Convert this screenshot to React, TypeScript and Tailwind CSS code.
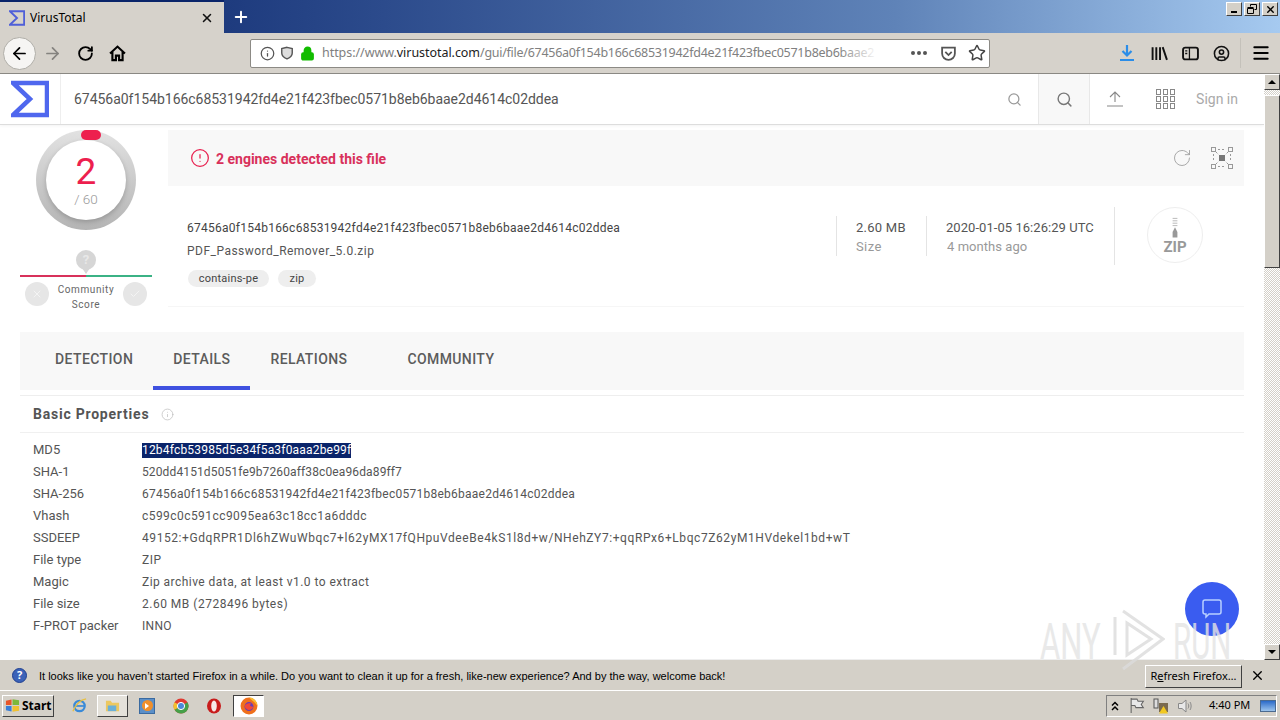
import { ArrowLeft, ArrowRight, RotateCw, Info, Lock, Star, Search, Check, X, Plus, Menu, CircleUser, AlertCircle } from "lucide-react";

const hash = "67456a0f154b166c68531942fd4e21f423fbec0571b8eb6baae2d4614c02ddea";

const props = [
  { label: "MD5", value: "12b4fcb53985d5e34f5a3f0aaa2be99f", track: "tracking-[0.19px]" },
  { label: "SHA-1", value: "520dd4151d5051fe9b7260aff38c0ea96da89ff7", track: "tracking-[0.125px]" },
  { label: "SHA-256", value: hash, track: "tracking-[0.25px]" },
  { label: "Vhash", value: "c599c0c591cc9095ea63c18cc1a6dddc", track: "tracking-[0.44px]" },
  { label: "SSDEEP", value: "49152:+GdqRPR1Dl6hZWuWbqc7+l62yMX17fQHpuVdeeBe4kS1l8d+w/NHehZY7:+qqRPx6+Lbqc7Z62yM1HVdekel1bd+wT", track: "tracking-[0.58px]" },
  { label: "File type", value: "ZIP", track: "tracking-[0.5px]" },
  { label: "Magic", value: "Zip archive data, at least v1.0 to extract", track: "tracking-[0.45px]" },
  { label: "File size", value: "2.60 MB (2728496 bytes)", track: "tracking-[0.5px]" },
  { label: "F-PROT packer", value: "INNO", track: "tracking-[0.3px]" },
];

const Sigma = ({ className }: { className: string }) => (
  <svg viewBox="0 0 38 38" className={className} fill="none" stroke="currentColor">
    <path d="M2 3H36V35H2L19 19Z" strokeWidth="4.5" />
  </svg>
);

const WinBtn = ({ children }: { children: React.ReactNode }) => (
  <div className="w-[16px] h-[14px] bg-[#d4d0c8] border border-t-white border-l-white border-r-[#404040] border-b-[#404040] flex items-center justify-center">
    {children}
  </div>
);

function TabStrip() {
  return (
    <div className="h-[33px] flex shrink-0 bg-[linear-gradient(90deg,#0a246a_0%,#2c4b8c_30%,#5f83b8_70%,#a6caf0_100%)]">
      <div className="w-[224px] bg-[#d6d2cb] border-t-2 border-[#0a246a] flex items-center pl-[9px] pr-[10px]">
        <Sigma className="w-4 h-4 text-[#4f5fd8]" />
        <span className="ml-[5px] text-[12px] text-black flex-1">VirusTotal</span>
        <X size={14} strokeWidth={2.6} className="text-[#111]" />
      </div>
      <div className="w-[34px] flex items-center justify-center">
        <Plus size={18} strokeWidth={2.6} className="text-white" />
      </div>
      <div className="ml-auto flex gap-[2px] pt-[2px] pr-[2px]">
        <WinBtn><div className="w-[6px] h-[2px] bg-black mt-[6px]" /></WinBtn>
        <WinBtn>
          <svg viewBox="0 0 10 10" className="w-[10px] h-[10px]" fill="none" stroke="#000">
            <path d="M3.5 2.5V.5h6v5H7.5M.5 4.5V9.5h6v-5Z M.5 3.5h6" />
          </svg>
        </WinBtn>
        <WinBtn><X size={11} strokeWidth={3} className="text-black" /></WinBtn>
      </div>
    </div>
  );
}

function NavBar() {
  return (
    <div className="h-[41px] shrink-0 bg-[#d6d2cb] border-b border-[#8c8a85] flex items-center">
      <div className="w-[33px] h-[33px] ml-[3px] rounded-full bg-[#f6f5f3] border border-[#b0aea8] flex items-center justify-center">
        <ArrowLeft size={19} strokeWidth={2.2} className="text-black" />
      </div>
      <ArrowRight size={19} strokeWidth={2.2} className="text-[#85837f] ml-[7px]" />
      <RotateCw size={17} strokeWidth={2.6} className="text-black ml-[15px]" />
      <svg viewBox="0 0 16 16" className="w-[17px] h-[17px] ml-[15px]" fill="none" stroke="#000" strokeWidth="2">
        <path d="M1 8 8 1.5 15 8M3.2 6.5V14.2H6.5V10H9.5V14.2H12.8V6.5" />
      </svg>
      <div className="ml-[124px] w-[740px] h-[29px] bg-white border border-[#8c8a85] rounded-[2px] flex items-center pl-[9px] pr-[3px] relative">
        <Info size={15} className="text-[#555]" />
        <svg viewBox="0 0 16 16" className="w-[14px] h-[14px] ml-[5px]" fill="#ddd" stroke="#555" strokeWidth="1.6">
          <path d="M8 1.5 14 3V8c0 3.5-3 5.5-6 6.8C5 13.5 2 11.5 2 8V3Z" />
        </svg>
        <Lock size={15} strokeWidth={2.4} className="text-[#12bc00] fill-[#12bc00] ml-[6px]" />
        <div className="ml-[7px] w-[556px] overflow-hidden whitespace-nowrap text-[12.5px] tracking-[-0.05px] text-[#808080] relative">
          https://www.<span className="text-[#222]">virustotal.com</span><span className="tracking-[-0.27px]">/gui/file/67456a0f154b166c68531942fd4e21f423fbec0571b8eb6baae2</span>
          <div className="absolute right-0 top-0 bottom-0 w-[40px] bg-gradient-to-r from-transparent to-white" />
        </div>
        <div className="ml-auto flex items-center">
          <div className="flex gap-[2px]">
            <i className="w-[4px] h-[4px] rounded-full bg-[#555]" />
            <i className="w-[4px] h-[4px] rounded-full bg-[#555]" />
            <i className="w-[4px] h-[4px] rounded-full bg-[#555]" />
          </div>
          <svg viewBox="0 0 16 16" className="w-[17px] h-[17px] ml-[13px]" fill="none" stroke="#555" strokeWidth="1.7">
            <path d="M2 2.5H14V8A6 6 0 0 1 2 8Z M5 6.5 8 9.5 11 6.5" />
          </svg>
          <Star size={18} strokeWidth={2} className="text-[#444] ml-[11px]" />
        </div>
      </div>
      <svg viewBox="0 0 18 18" className="w-[18px] h-[18px] ml-[128px]" fill="none" stroke="#2b8de8" strokeWidth="2.2">
        <path d="M9 1V11M4.5 7 9 11.5 13.5 7M2 16H16" />
      </svg>
      <svg viewBox="0 0 16 16" className="w-[17px] h-[17px] ml-[15px]" fill="none" stroke="#111" strokeWidth="1.8">
        <path d="M1.5 2V14M5 2V14M8.5 2V14M11 2 15 14" />
      </svg>
      <svg viewBox="0 0 16 16" className="w-[17px] h-[17px] ml-[14px]" fill="none" stroke="#111" strokeWidth="1.8">
        <rect x="1" y="2.5" width="14" height="11" rx="2" />
        <path d="M7 2.5V13.5M3 5.5H5M3 8H5" strokeWidth="1.2" />
      </svg>
      <CircleUser size={17} strokeWidth={2.2} className="text-[#111] ml-[14px]" />
      <div className="w-px h-[30px] bg-[#c4c1ba] ml-[10px]" />
      <Menu size={20} strokeWidth={2.4} className="text-black ml-[10px]" />
    </div>
  );
}

function SiteHeader() {
  return (
    <div className="h-[51px] shrink-0 bg-white border-b border-[#ddd] flex items-center shadow-[0_1px_3px_rgba(0,0,0,0.05)]">
      <div className="w-[61px] h-full border-r border-[#eee] flex items-center justify-center">
        <Sigma className="w-[38px] h-[38px] text-[#4f67ee]" />
      </div>
      <div className="pl-[13px] pt-[1px] text-[14px] tracking-[-0.03px] flex-1 text-[#555]">{hash}</div>
      <Search size={15} className="text-[#999]" />
      <div className="w-[52px] h-full ml-[16px] bg-[#f8f8f8] border-x border-[#e8e8e8] flex items-center justify-center">
        <Search size={17} className="text-[#777]" />
      </div>
      <svg viewBox="0 0 18 18" className="w-[18px] h-[18px] ml-[16px]" fill="none" stroke="#888" strokeWidth="1.1">
        <path d="M9 12V2M4 7 9 2 14 7M1 16H17" />
      </svg>
      <div className="ml-[32px] grid grid-cols-3 gap-x-[2px] gap-y-[1px]">
        {[...Array(9)].map((_, i) => (
          <div key={i} className="w-[5px] h-[6px] border border-[#888]" />
        ))}
      </div>
      <span className="ml-[21px] mr-[26px] text-[14px] text-[#aaa]">Sign in</span>
    </div>
  );
}

function Score() {
  return (
    <div className="w-[132px] shrink-0 flex flex-col items-center relative">
      <div className="w-[100px] h-[100px] rounded-full bg-gradient-to-b from-[#e2e2e2] to-[#b4b4b4] flex items-center justify-center relative">
        <div className="absolute top-0 left-[45px] w-[20px] h-[10px] rounded-full bg-[#ed1f4e]" />
        <div className="w-[80px] h-[80px] rounded-full bg-white shadow-[0_2px_5px_rgba(0,0,0,0.2)] flex flex-col items-center justify-center">
          <span className="text-[37px] leading-[34px] text-[#ed1f4e] mt-[2px]">2</span>
          <span className="text-[13.5px] leading-[18px] font-light text-[#999] mt-[1px]">/ 60</span>
        </div>
      </div>
      <div className="mt-[20px] w-[20px] h-[20px] rounded-full bg-[#d6d6d6] text-[#e8e8e8] text-[13px] font-bold flex items-center justify-center relative">
        ?
        <div className="absolute top-[18px] left-[6px] w-0 h-0 border-x-[4px] border-x-transparent border-t-[6px] border-t-[#d6d6d6]" />
      </div>
      <div className="w-full flex h-[2px] mt-[5px]">
        <div className="flex-1 bg-[#d8315b]" />
        <div className="flex-1 bg-[#3bb285]" />
      </div>
      <div className="w-full flex items-start justify-between px-[5px] mt-[5px]">
        <div className="w-[24px] h-[24px] rounded-full bg-[#e6e6e6] flex items-center justify-center">
          <X size={12} className="text-[#f4f4f4]" />
        </div>
        <div className="text-[10px] leading-[15px] text-[#666] tracking-[0.6px] text-center">Community<br />Score</div>
        <div className="w-[24px] h-[24px] rounded-full bg-[#e6e6e6] flex items-center justify-center">
          <Check size={12} className="text-[#f4f4f4]" />
        </div>
      </div>
    </div>
  );
}

function FileCard() {
  return (
    <div className="flex-1 flex flex-col border-b border-[#f6f6f6] h-[177px]">
      <div className="h-[56px] shrink-0 bg-[#f8f8f8] flex items-center pl-[22px] pr-[10px]">
        <AlertCircle size={20} strokeWidth={1.5} className="text-[#e8204f]" />
        <span className="ml-[6px] pt-[2px] text-[14px] font-bold text-[#d8315b]">2 engines detected this file</span>
        <RotateCw size={20} strokeWidth={1} className="text-[#999] ml-auto" />
        <svg viewBox="0 0 24 24" className="w-[24px] h-[24px] ml-[18px]" fill="none" stroke="#999">
          <rect x="1.5" y="1.5" width="4" height="4" />
          <rect x="18.5" y="1.5" width="4" height="4" />
          <rect x="1.5" y="18.5" width="4" height="4" />
          <rect x="18.5" y="18.5" width="4" height="4" />
          <rect x="9" y="9" width="6" height="6" fill="#777" stroke="none" />
          <path d="M6 6 9 9M18 6 15 9M6 18 9 15M18 18 15 15M8 3.5H16M8 20.5H16M3.5 8V16M20.5 8V16" strokeDasharray="2 2" />
        </svg>
      </div>
      <div className="flex-1 flex items-start pl-[19px]">
        <div className="flex-1 pt-[33px]">
          <div className="text-[12px] leading-[18px] tracking-[0.25px] text-[#444]">{hash}</div>
          <div className="text-[12px] leading-[18px] tracking-[0.48px] text-[#555] mt-[5px]">PDF_Password_Remover_5.0.zip</div>
          <div className="flex gap-[9px] mt-[10px] ml-[1px]">
            <span className="h-[17px] w-[81px] text-center rounded-full bg-[#eee] text-[11px] leading-[17px] tracking-[0.2px] text-[#444]">contains-pe</span>
            <span className="h-[17px] w-[38px] text-center rounded-full bg-[#eee] text-[11px] leading-[17px] tracking-[0.2px] text-[#444]">zip</span>
          </div>
        </div>
        <div className="w-[90px] h-[40px] mt-[30px] border-l border-[#e4e4e4] pl-[19px] pt-[2px]">
          <div className="text-[13px] leading-[19px] tracking-[0.25px] text-[#555]">2.60 MB</div>
          <div className="text-[13px] leading-[19px] tracking-[0.4px] text-[#999]">Size</div>
        </div>
        <div className="w-[188px] h-[40px] mt-[30px] border-l border-[#e4e4e4] pl-[19px] pt-[2px]">
          <div className="text-[13px] leading-[19px] tracking-[0.05px] text-[#555]">2020-01-05 16:26:29 UTC</div>
          <div className="text-[13px] leading-[19px] tracking-[0.05px] text-[#999] pl-[1px]">4 months ago</div>
        </div>
        <div className="w-[130px] h-[58px] mt-[21px] border-l border-[#e4e4e4] pl-[32px]">
          <div className="w-[56px] h-[56px] rounded-full border border-[#eee] flex flex-col items-center justify-center">
            <svg viewBox="0 0 10 26" className="w-[8px] h-[24px]" fill="#999">
              <path d="M2 1H8M2 4H8M2 7H8M2 10H8" stroke="#aaa" />
              <path d="M5 12 8 18V25H2V18Z" />
            </svg>
            <span className="text-[15px] leading-[14px] font-bold text-[#999]">ZIP</span>
          </div>
        </div>
      </div>
    </div>
  );
}

function Tabs() {
  return (
    <div className="h-[58px] mt-[20px] shrink-0 bg-[#f8f8f8] flex pl-[15px] text-[14px] font-medium tracking-[0.4px] text-[#5c5c5c]">
      <div className="px-[20px] flex items-center pb-[4px]">DETECTION</div>
      <div className="px-[20px] flex items-center pt-[1px] border-b-4 border-[#3f51e0]">DETAILS</div>
      <div className="px-[20px] flex items-center pb-[4px]">RELATIONS</div>
      <div className="ml-[20px] px-[20px] flex items-center pb-[4px]">COMMUNITY</div>
    </div>
  );
}

function BasicProperties() {
  return (
    <div className="mt-[5px] border-t border-[#eee] flex-1">
      <div className="h-[37px] border-b border-[#f0f0f0] flex items-center pl-[13px]">
        <span className="text-[14px] font-bold text-[#555] tracking-[0.77px]">Basic Properties</span>
        <Info size={13} strokeWidth={1.3} className="text-[#bbb] ml-[12px]" />
      </div>
      <div className="pt-[6px] pl-[13px] border-b border-[#eee] pb-[22px]">
        {props.map(({ label, value, track }, i) => (
          <div key={label} className="h-[22px] flex items-center text-[12px]">
            <div className="w-[109px] text-[#555] text-[13px] whitespace-nowrap">{label}</div>
            {i === 0 ? (
              <span className={`bg-[#0a246a] text-white leading-[15px] ${track}`}>{value}</span>
            ) : (
              <span className={`text-[#555] ${track}`}>{value}</span>
            )}
          </div>
        ))}
      </div>
    </div>
  );
}

function Scrollbar() {
  return (
    <div className="w-[16px] shrink-0 flex flex-col bg-[repeating-conic-gradient(#d4d0c8_0_25%,#ffffff_0_50%)] bg-[length:2px_2px]">
      <div className="h-[16px] bg-[#d4d0c8] border border-t-white border-l-white border-r-[#404040] border-b-[#404040] flex items-center justify-center">
        <div className="w-0 h-0 border-x-[4px] border-x-transparent border-b-[4px] border-b-black" />
      </div>
      <div className="h-[173px] mt-[5px] bg-[#d4d0c8] border border-t-white border-l-white border-r-[#404040] border-b-[#404040]" />
      <div className="mt-auto h-[16px] bg-[#d4d0c8] border border-t-white border-l-white border-r-[#404040] border-b-[#404040] flex items-center justify-center">
        <div className="w-0 h-0 border-x-[4px] border-x-transparent border-t-[4px] border-t-black" />
      </div>
    </div>
  );
}

function InfoBar() {
  return (
    <div className="h-[30px] shrink-0 bg-[#d4d0c8] flex items-center pl-[12px] text-black">
      <div className="w-[15px] h-[15px] rounded-full bg-[#3b62b8] border border-[#1f3f90] text-white text-[11px] font-bold flex items-center justify-center">?</div>
      <span className="ml-[12px] pt-[2px] text-[11px] font-['Liberation_Sans',sans-serif] whitespace-nowrap">It looks like you haven’t started Firefox in a while. Do you want to clean it up for a fresh, like-new experience? And by the way, welcome back!</span>
      <div className="ml-auto w-[97px] h-[23px] mt-[2px] bg-[#d4d0c8] border border-t-white border-l-white border-r-[#404040] border-b-[#404040] flex items-center justify-center text-[11px] whitespace-nowrap">
        <span>R<u>e</u>fresh Firefox…</span>
      </div>
      <X size={15} strokeWidth={2.2} className="ml-[8px] mr-[15px]" />
    </div>
  );
}

function Taskbar() {
  return (
    <div className="h-[30px] shrink-0 bg-[#d4d0c8] border-t border-white flex items-center pl-[2px] text-[12px]">
      <div className="w-[52px] h-[22px] bg-[#d4d0c8] border border-t-white border-l-white border-r-[#404040] border-b-[#404040] flex items-center pl-[2px] gap-[2px]">
        <svg viewBox="0 0 16 16" className="w-[15px] h-[15px]">
          <path d="M1 3 7 1.5V7.5H1Z" fill="#e8562a" />
          <path d="M8 1.3 15 2.5V7.5H8Z" fill="#7cb83a" />
          <path d="M1 8.5H7V14.5L1 13Z" fill="#3a7fd8" />
          <path d="M8 8.5H15V13.5L8 14.7Z" fill="#f0c030" />
        </svg>
        <span className="font-bold text-[12px]">Start</span>
      </div>
      <div className="ml-[16px] w-[18px] flex justify-center">
        <svg viewBox="0 0 18 18" className="w-[17px] h-[17px]" fill="none">
          <circle cx="9" cy="9.5" r="5.5" stroke="#3a8ad8" strokeWidth="2.4" />
          <path d="M3.5 9.5H14.5" stroke="#3a8ad8" strokeWidth="1.8" />
          <path d="M2 15C5 8 10 3 16 2" stroke="#e8c040" strokeWidth="1.4" />
        </svg>
      </div>
      <div className="ml-[9px] w-[31px] h-[22px] bg-[#e4e1da] border border-t-white border-l-white border-r-[#404040] border-b-[#404040] flex items-center justify-center">
        <svg viewBox="0 0 16 16" className="w-[15px] h-[15px]">
          <path d="M1 3H6L7.5 5H15V14H1Z" fill="#ecc860" />
          <rect x="3" y="8" width="9" height="6" fill="#6ab0d8" />
        </svg>
      </div>
      <div className="ml-[11px] w-[16px] h-[16px] bg-[#5b8fc8] border border-[#3a6aa0] flex items-center justify-center">
        <div className="w-[11px] h-[11px] rounded-full bg-[#f0902c] flex items-center justify-center">
          <div className="w-0 h-0 border-y-[3px] border-y-transparent border-l-[4px] border-l-white" />
        </div>
      </div>
      <svg viewBox="0 0 16 16" className="w-[16px] h-[16px] ml-[18px]">
        <circle cx="8" cy="8" r="7.5" fill="#e03a30" />
        <path d="M14.5 4.2A7.5 7.5 0 0 1 8 15.5 7.5 7.5 0 0 1 1.5 11.8L8 8Z" fill="#45a048" />
        <path d="M1.5 4.2A7.5 7.5 0 0 0 1.5 11.8L8 8Z" fill="#f2c230" />
        <circle cx="8" cy="8" r="3.6" fill="#4a88d8" stroke="#fff" />
      </svg>
      <svg viewBox="0 0 16 16" className="w-[16px] h-[16px] ml-[17px]">
        <ellipse cx="8" cy="8" rx="7" ry="7.5" fill="#c81c1c" />
        <ellipse cx="8" cy="8" rx="2.8" ry="5.5" fill="#f6e8e8" />
      </svg>
      <div className="ml-[11px] w-[31px] h-[22px] bg-white border border-t-[#404040] border-l-[#404040] border-r-white border-b-white flex items-center justify-center">
        <svg viewBox="0 0 16 16" className="w-[18px] h-[18px]">
          <circle cx="8" cy="8" r="7.5" fill="#f0701c" />
          <path d="M8 .5A7.5 7.5 0 0 1 15.5 8C13 4 10 3 8 .5Z" fill="#f8c030" />
          <circle cx="8" cy="8.5" r="4" fill="#6a3cb8" />
          <path d="M4 8.5C5 6 8 5 10 6 8 7 9 9 12 8.5 11 12 6 13 4 8.5Z" fill="#f04838" />
        </svg>
      </div>
      <div className="ml-auto mr-[3px] w-[171px] h-[22px] border border-t-[#808080] border-l-[#808080] border-r-white border-b-white flex items-center pl-[4px]">
        <svg viewBox="0 0 8 10" className="w-[8px] h-[10px]" fill="none" stroke="#000" strokeWidth="1.5">
          <path d="M1 4.5 4 1.5 7 4.5M1 9 4 6 7 9" />
        </svg>
        <svg viewBox="0 0 14 16" className="w-[16px] h-[17px] ml-[10px]" fill="#e8e8e8" stroke="#666">
          <path d="M1.5 1V15M1.5 2H7L8 4H13L11 7 13 10H6L5 8H1.5Z" />
        </svg>
        <svg viewBox="0 0 16 16" className="w-[16px] h-[16px] ml-[8px]">
          <rect x="1" y="1" width="4" height="9" fill="#ddd" stroke="#555" />
          <rect x="6" y="5" width="9" height="9" fill="#7a6a50" />
          <path d="M10.5 8 15 15.5H6Z" fill="#f2c820" />
        </svg>
        <svg viewBox="0 0 16 16" className="w-[16px] h-[16px] ml-[8px]" fill="none" stroke="#888">
          <path d="M1.5 5.5H5L9 2V14L5 10.5H1.5Z" fill="#e8e8e8" />
          <path d="M11 5.5C12 7 12 9 11 10.5M13 4C14.5 6 14.5 10 13 12" />
        </svg>
        <span className="ml-[16px] text-[11px] w-[44px] whitespace-nowrap">4:40 PM</span>
        <div className="ml-[7px] w-[16px] h-[12px] bg-gradient-to-b from-[#2a6ac8] to-[#9cc4ec] border border-[#4a6a90]" />
      </div>
    </div>
  );
}

function Watermark() {
  return (
    <div className="absolute left-[1040px] top-[608px] h-[64px] w-[192px] flex items-center opacity-80 pointer-events-none font-['Roboto',sans-serif] font-normal text-[50px] leading-[36px] text-[#e4e4e4]">
      <div className="w-[73px] shrink-0 mt-[4px]">
        <span className="block w-[60px] origin-left scale-x-[0.62]">ANY</span>
      </div>
      <svg viewBox="0 0 52 62" className="w-[52px] h-[62px] shrink-0" fill="none" stroke="#dcdcdc" strokeWidth="3">
        <path d="M2 8V46M10 2 50 30 10 60" />
        <path d="M14 14 38 30 14 46Z" />
      </svg>
      <div className="ml-[8px] w-[59px] shrink-0 mt-[4px]">
        <span className="block w-[59px] origin-left scale-x-[0.59]">RUN</span>
      </div>
    </div>
  );
}

export default function App() {
  return (
    <div className="w-[1280px] h-[720px] relative overflow-hidden flex flex-col bg-white font-['Noto_Sans','DejaVu_Sans',sans-serif]">
      <TabStrip />
      <NavBar />
      <div className="flex-1 min-h-0 flex">
        <div className="flex-1 min-w-0 flex flex-col bg-white font-['Roboto',sans-serif]">
          <SiteHeader />
          <div className="flex-1 min-h-0 px-[20px] pt-[5px] flex flex-col">
            <div className="flex gap-[16px] shrink-0">
              <Score />
              <FileCard />
            </div>
            <Tabs />
            <BasicProperties />
          </div>
        </div>
        <Scrollbar />
      </div>
      <InfoBar />
      <Taskbar />
      <div className="absolute left-[1185px] top-[582px] w-[54px] h-[54px] rounded-full bg-[#3a5cf0] flex items-center justify-center">
        <svg viewBox="0 0 24 24" className="w-[24px] h-[24px]" fill="none" stroke="#b8d0ff" strokeWidth="1.5">
          <path d="M5 3H19A2 2 0 0 1 21 5V15A2 2 0 0 1 19 17H9L6 20V17H5A2 2 0 0 1 3 15V5A2 2 0 0 1 5 3Z" />
        </svg>
      </div>
      <Watermark />
    </div>
  );
}
